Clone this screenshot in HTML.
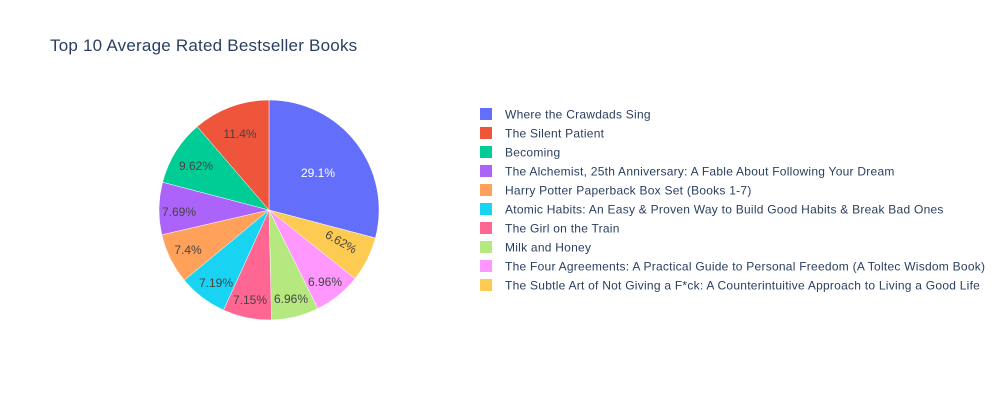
<!DOCTYPE html>
<html><head><meta charset="utf-8"><style>
body{margin:0;background:#fff;width:1000px;height:400px;overflow:hidden}
svg text{font-family:"Liberation Sans",sans-serif}
</style></head><body>
<svg width="1000" height="400" xmlns="http://www.w3.org/2000/svg">
<text x="50" y="51" font-size="17" fill="#2a3f5f" letter-spacing="0.22">Top 10 Average Rated Bestseller Books</text>
<g stroke="#fff" stroke-width="0.5">
<path d="M269,210 L269,100 A110,110 0 0 1 375.4,238.0 Z" fill="#636efa"/>
<path d="M269,210 L375.4,238.0 A110,110 0 0 1 355.0,278.6 Z" fill="#FECB52"/>
<path d="M269,210 L355.0,278.6 A110,110 0 0 1 317.8,308.6 Z" fill="#FF97FF"/>
<path d="M269,210 L317.8,308.6 A110,110 0 0 1 271.5,320.0 Z" fill="#B6E880"/>
<path d="M269,210 L271.5,320.0 A110,110 0 0 1 223.5,310.1 Z" fill="#FF6692"/>
<path d="M269,210 L223.5,310.1 A110,110 0 0 1 184.3,280.2 Z" fill="#19d3f3"/>
<path d="M269,210 L184.3,280.2 A110,110 0 0 1 161.8,234.8 Z" fill="#FFA15A"/>
<path d="M269,210 L161.8,234.8 A110,110 0 0 1 162.6,182.2 Z" fill="#ab63fa"/>
<path d="M269,210 L162.6,182.2 A110,110 0 0 1 197.2,126.6 Z" fill="#00cc96"/>
<path d="M269,210 L197.2,126.6 A110,110 0 0 1 269,100 Z" fill="#EF553B"/>
</g>
<g font-size="12" fill="#444" text-anchor="middle">
<text x="318" y="177" fill="#fff">29.1%</text>
<text x="240" y="138">11.4%</text>
<text x="196" y="170">9.62%</text>
<text x="179" y="216">7.69%</text>
<text x="188" y="254">7.4%</text>
<text x="216" y="287">7.19%</text>
<text x="250" y="304">7.15%</text>
<text x="291" y="303">6.96%</text>
<text x="325" y="286">6.96%</text>
<text x="0" y="4" transform="translate(341,242) rotate(30)">6.62%</text>
</g>
<g font-size="12" fill="#2a3f5f" letter-spacing="0.25">
<rect x="480" y="108" width="12" height="12" fill="#636efa"/><text x="505" y="118.5">Where the Crawdads Sing</text>
<rect x="480" y="127" width="12" height="12" fill="#EF553B"/><text x="505" y="137.5">The Silent Patient</text>
<rect x="480" y="146" width="12" height="12" fill="#00cc96"/><text x="505" y="156.5">Becoming</text>
<rect x="480" y="165" width="12" height="12" fill="#ab63fa"/><text x="505" y="175.5">The Alchemist, 25th Anniversary: A Fable About Following Your Dream</text>
<rect x="480" y="184" width="12" height="12" fill="#FFA15A"/><text x="505" y="194.5">Harry Potter Paperback Box Set (Books 1-7)</text>
<rect x="480" y="203" width="12" height="12" fill="#19d3f3"/><text x="505" y="213.5">Atomic Habits: An Easy &amp; Proven Way to Build Good Habits &amp; Break Bad Ones</text>
<rect x="480" y="222" width="12" height="12" fill="#FF6692"/><text x="505" y="232.5">The Girl on the Train</text>
<rect x="480" y="241" width="12" height="12" fill="#B6E880"/><text x="505" y="251.5">Milk and Honey</text>
<rect x="480" y="260" width="12" height="12" fill="#FF97FF"/><text x="505" y="270.5">The Four Agreements: A Practical Guide to Personal Freedom (A Toltec Wisdom Book)</text>
<rect x="480" y="279" width="12" height="12" fill="#FECB52"/><text x="505" y="289.5">The Subtle Art of Not Giving a F*ck: A Counterintuitive Approach to Living a Good Life</text>
</g>
</svg>
</body></html>
